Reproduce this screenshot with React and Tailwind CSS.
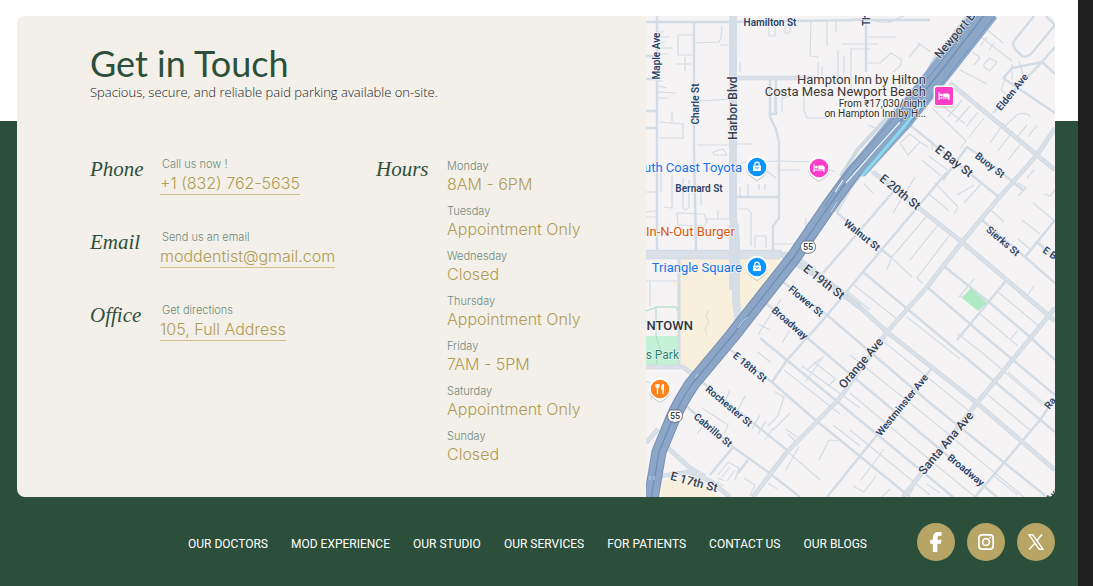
import { FaFacebookF } from "react-icons/fa6";

const contacts = [
  { label: "Phone", hint: "Call us now !", value: "+1 (832) 762-5635", href: "tel:+18327625635" },
  { label: "Email", hint: "Send us an email", value: "moddentist@gmail.com", href: "mailto:moddentist@gmail.com" },
  { label: "Office", hint: "Get directions", value: "105, Full Address", href: "#directions" },
];

const hours = [
  ["Monday", "8AM - 6PM"],
  ["Tuesday", "Appointment Only"],
  ["Wednesday", "Closed"],
  ["Thursday", "Appointment Only"],
  ["Friday", "7AM - 5PM"],
  ["Saturday", "Appointment Only"],
  ["Sunday", "Closed"],
];

const links = ["OUR DOCTORS", "MOD EXPERIENCE", "OUR STUDIO", "OUR SERVICES", "FOR PATIENTS", "CONTACT US", "OUR BLOGS"];

const InstagramMark = ({ className }) => (
  <svg viewBox="0 0 16 16" className={className} fill="none" stroke="currentColor" strokeWidth="1.7">
    <rect x=".9" y=".9" width="14.2" height="14.2" rx="3.2" />
    <circle cx="8" cy="8" r="3.4" />
    <circle cx="12.2" cy="3.8" r=".9" fill="currentColor" stroke="none" />
  </svg>
);

const XMark = ({ className }) => (
  <svg viewBox="0 0 16 16" className={className} fill="none" stroke="currentColor" strokeWidth="1.4">
    <path d="M1.1 .8H4.8L14.9 15.2H11.2Z" />
    <path d="M14 .5L8.9 6.5M7.2 8.7L1.2 15.5" />
  </svg>
);

const socials = [
  { name: "Facebook", Icon: FaFacebookF, size: "size-5" },
  { name: "Instagram", Icon: InstagramMark, size: "size-4" },
  { name: "X", Icon: XMark, size: "size-4" },
];

const lanes = [
  "M678 35H693M678 35V55H692 M695 43L719 42L721 38L722 26 M676 64H691M685 57V71 M720 45H729 M658 32H664M658 37H670M658 42H665M658 48H673M658 54H668 M658 81H663M658 86L667 88M658 92L676 93M658 98H668",
  "M659 122L683 124V138H659M672 112V122 M697 101L733 99 M697 145H733M737 144H753 M713 152L723 149L727 155H714Z M740 62V72 M769 27V36H775V27M785 26V33H790V24 M811 20L810 56L819 57 M827 20V46 M836 20V32 M842 44H860M851 50V92 M838 50V78M844 56V75M818 62V82M822 66V76 M804 88V110L807 118H827 M775 88V114M782 92V112 M783 98L790 96",
  "M740 163L779 161L815 162L835 172 M661 168V192M672 175V208L664 207 M683 178V208Q686 212 689 207V180 M701 186V205 M646 192H657M646 217H657 M677 213L704 214L707 222L704 226L678 225Z M705 219H732 M718 210V219 M696 226V248 M646 212L656 211 M738 209H748L751 213V246 M755 248V236H766V248 M806 218V236L802 244 M740 187V196M748 184V196M759 184V190M765 184V190",
  "M758 168L768 172L776 178 M779 170H800 M773 225V248M773 244H800L812 236 M646 281H677 M650 281V306 M646 381L660 388M653 386L651 400",
  "M850 19H868Q890 26 898 18L904 16 M850 44H878M850 49H870 M868 37H896 M867 63H880L891 53L902 60L900 66L893 72 M918 43L931 52M920 44L909 57 M868 125L875 128 M900 80V94",
  "M973 52L980 58L974 65 M984 64L990 58L997 62L990 71L984 67Z M984 27L1003 43M977 34L1012 61M987 37L981 45M995 42L989 50 M960 70L987 84 M1007 74L1001 90L1011 98 M1012 64V80 M1019 61L1024 77",
  "M962 100L948 117M970 106L956 122M978 112L966 127M984 118L969 137 M1004 123L990 143M1013 131L998 151M1024 140L1008 160 M1003 128L1018 114Q1027 112 1031 117 M1027 125L1018 136 M1037 125L1028 137 M938 102L965 124M932 108L966 141L960 149 M1034 170L1027 178M1044 194L1050 196L1055 190",
  "M900 143L910 134L920 142L908 155Z M920 142L928 147 M922 160L941 176M929 156L950 172M932 144V150 M1018 183L1026 188L1018 196 M974 185L957 195M983 182L964 203 M929 194L949 211M935 183L958 207L954 214 M915 177L893 213 M870 170L880 178M864 184L873 193",
  "M926 217L892 257L887 269M938 225L910 260M949 236L917 278L923 284 M1033 203L1055 221M1022 220L1040 234M1018 239L1030 249 M991 210L1004 222 M893 259L912 277 M972 294L960 297M974 279L959 297 M1034 286L1027 296",
  "M854 285L897 319M846 290L870 310M998 292L1040 327M979 313L1018 346M1018 330L1010 340 M850 355L930 419L990 469L1024 497 M850 393L930 460L975 497 M850 430L930 495 M878 337L937 385L975 416 M907 317L960 359M958 334L985 355L1042 404 M988 395L1030 430M994 476L1018 495 M1008 372L1045 404",
  "M781 299L764 325L758 335M770 330L758 324M790 330L782 343M758 352L770 362M824 356L806 381M814 362L836 379L828 386M821 358L807 370 M775 392L784 397L778 416L768 426M790 413L783 420L773 430 M786 429L797 437M788 434L798 444 M799 446L786 470M787 451L820 480 M819 460L829 440L838 441 M802 366L860 408 M784 370L840 414 M833 425L860 446",
  "M702 408L728 425L724 435M705 424L697 434 M718 475L728 462L739 468L735 480 M744 478L755 485L750 496 M718 478L725 481M716 482L724 486M730 467L722 477M735 470L727 481 M768 483L777 489 M745 396L738 410M730 390L725 402 M760 415L752 429M766 421L758 434M773 428L765 440 M876 476L864 492L853 486M890 489L882 497M914 486L909 496M927 484L940 493 M884 449L861 480",
];

const streets =
  "M646 22H735L860 20H930 M657 16V250M694 22V150L696 250 M646 56H657M646 79H657M646 111H657M646 128H657 M770 78V117L776 129L779 142V218L773 226V250 M776 80V114H770 M737 197H779 M866 18V72 M1042 62L1055 47 M1042 62L993 113 M1042 62L1055 74 M1003 78L1055 113 M1003 78L1012 68L1042 62 M910 125L1000 198 M943 180L967 147L982 157L1023 190 M947 172L863 272L823 320L787 360L772 382 M893 192L850 242L823 273 M837 213L892 258 M982 220L1025 257L1055 283 M1025 257L1055 220M1037 242L1055 258 M863 272L1055 432 M927 287L983 335L1055 395 M945 267L990 303L1030 337L1055 360 M1005 282L957 340 M783 282L827 315L930 403L1047 497 M766 303L850 374L997 497 M760 338L850 412L953 497 M728 348L773 383L813 418L910 497 M697 378L787 450 M685 405L733 447L768 472L800 497 M932 368L877 435L827 497 M1055 398L1040 420L975 497 M733 447L710 475 M748 460L738 473";

const avenues =
  "M950 83L1037 155L1055 170 M1055 128L1037 155L997 200L962 242L927 287L887 332L840 398L787 452L753 497 M873 172L962 242L1055 321 M1055 308L1033 335L977 403L903 497 M737 78H815 M646 252H782 M646 257H780 M783 254L795 256L850 298L887 332L977 403L1055 470 M660 476L690 472L712 482L730 497 M667 447L690 468L705 477 M646 367H683L695 376 M658 429L646 443 M995 16L925 97L850 187L836 212";

const labels = [
  ["Hamilton St", 770, 22, 0, 10], ["Maple Ave", 656, 56, -90, 10], ["Charle St", 695, 104, -90, 10], ["Harbor Blvd", 733, 108, -90, 12],
  ["Th", 866, 20, -90, 10], ["Newport B", 955, 35, -50, 12], ["Elden Ave", 1012, 92, -51, 10], ["E Bay St", 954, 161, 38, 12],
  ["Buoy St", 990, 165, 38, 10], ["E 20th St", 900, 192, 39, 12], ["Walnut St", 862, 235, 39, 10], ["Sierks St", 1003, 241, 40, 10],
  ["E B", 1050, 253, 35, 10], ["Bernard St", 699, 188, 0, 10], ["E 19th St", 824, 282, 38, 12], ["Flower St", 806, 301, 40, 10],
  ["Broadway", 790, 323, 41, 10], ["Orange Ave", 861, 363, -50, 12], ["E 18th St", 750, 367, 40, 10], ["Rochester St", 729, 406, 40, 10],
  ["Cabrillo St", 713, 430, 40, 10], ["E 17th St", 694, 482, 15, 12], ["Westminster Ave", 902, 405, -51, 10], ["Santa Ana Ave", 946, 443, -50, 12],
  ["Broadway", 966, 470, 39, 10], ["Ra", 1050, 403, -52, 10], ["Ave", 1053, 494, -50, 10],
];

function Label({ text, x, y, angle = 0, size = 13, fill = "#294368", anchor = "middle", weight = 500 }) {
  return (
    <text
      x={x} y={y} fill={fill} fontSize={size} fontWeight={weight} textAnchor={anchor} dominantBaseline="central"
      stroke="#f8f7f8" strokeWidth="1.6" strokeOpacity=".8" strokeLinejoin="round" paintOrder="stroke" transform={`rotate(${angle} ${x} ${y})`}
    >
      {text}
    </text>
  );
}

function Pin({ x, y, color, children }) {
  return (
    <g transform={`translate(${x} ${y})`}>
      <path d="M0 13L-5.5 9.2A11 11 0 1 1 5.5 9.2Z" transform="translate(0 1)" fill="#0003" />
      <path d="M0 13L-5.5 9.2A11 11 0 1 1 5.5 9.2Z" fill="#fff" />
      <circle r="9.3" fill={color} />
      {children}
    </g>
  );
}

const Bag = () => (
  <g>
    <path d="M-4-1.5H4V4H-4Z" fill="#fff" />
    <path d="M-2.2-1.5V-2.6a2.2 2.2 0 0 1 4.4 0v1.1" fill="none" stroke="#fff" strokeWidth="1.2" />
    <path d="M-1.6 .4Q0 2.4 1.6 .4" fill="none" stroke="#0b93ff" />
  </g>
);

const Bed = () => (
  <g fill="#fff">
    <path d="M-5.5-3.8h1.2V1.4H4.3V-1.2h1.2V4H4.3V2.6H-4.3V4H-5.5Z" />
    <circle cx="-2.6" cy="-.9" r="1.4" />
    <path d="M-.8-2.6H3.6Q5.5-2.6 5.5-.8V1H-.8Z" />
  </g>
);

const Shield = ({ x, y }) => (
  <g transform={`translate(${x} ${y})`}>
    <path d="M-5-6H5Q9-2 7 3Q5 6 0 6.5Q-5 6-7 3Q-9-2-5-6Z" fill="#fff" stroke="#6b7480" strokeWidth="1" />
    <text fill="#333c48" fontSize="9" fontWeight="500" textAnchor="middle" dominantBaseline="central">55</text>
  </g>
);

const highway = "M985 14L945 66L903 118L853 173L831 203L794 257L732 336L692 384Q680 402 673 418L659 452L651 499";

function StreetMap() {
  return (
    <svg viewBox="646 16 409 481" preserveAspectRatio="xMidYMid slice" className="absolute inset-0 size-full" fontFamily="Roboto, sans-serif" role="img" aria-label="Map of Costa Mesa">
      <rect x="646" y="16" width="409" height="481" fill="#f5f3f4" />
      <path d="M679 258H778L786 264L733 330L697 374L679 365V286H673V282H679Z M662 481L690 476L720 497H658Z" fill="#f8f0dc" />
      <path d="M646 336H679V365H646Z" fill="#c4f1d5" />
      <path d="M646 311L657 307H677V311 M656 307V336L660 348L656 365" fill="none" stroke="#a5dbbb" />
      <g fill="none" stroke="#d3dce4" strokeLinejoin="round">
        <path d={lanes.join(" ")} strokeWidth="1.2" />
        <path d={streets} strokeWidth="2.4" />
        <path d="M1034 16L1014 41Q1012 45 1015 49L1022 56Q1026 58 1031 54L1055 25L1046 16" strokeWidth="2.5" />
        <path d="M679 258V365" strokeWidth="3" />
        <path d={avenues} stroke="#ccd6de" strokeWidth="4.6" />
        <path d={avenues} stroke="#d9e0e7" strokeWidth="3.4" />
        <path d="M733 16V215L736 240V300L739 323" stroke="#d5dde6" strokeWidth="8" />
        <path d="M734 225V290" stroke="#d5dde6" strokeWidth="10" />
        <path d="M780 254L824 280L860 307" stroke="#d3dce4" strokeWidth="6" />
        <path d="M968 16L934 60L920 86L884 121L858 149L841 176" stroke="#ced8e1" strokeWidth="4" />
      </g>
      <path d="M962 298L971 288L987 303L978 311Z" fill="#aeeac4" />
      <path d="M709 310L706 316L709 322L705 329L707 335" fill="none" stroke="#ddd9d0" />
      <g fill="none" strokeLinejoin="round">
        <path d={highway} stroke="#7891b1" strokeWidth="15" />
        <path d="M992 14L948 70L906 122L860 172" stroke="#8ca8ca" strokeWidth="13" />
        <path d="M977 14L936 68L897 118L849 176" stroke="#8ca8ca" strokeWidth="12" />
        <path d={highway} stroke="#8ba6c7" strokeWidth="13" />
        <path d={highway} stroke="#708fb5" strokeWidth="1.3" />
        <path d="M995 16L952 71L910 123 M976 16L938 66L900 111L850 167L825 206" stroke="#7391b7" strokeWidth="1" />
        <path d="M900 122L874 151L846 183 M843 180L835 192" stroke="#e8f1f8" strokeWidth="1.3" />
        <path d="M922 104L902 129L862 176" stroke="#88d9ec" strokeWidth="3" />
        <path d="M738 328L743 321L748 317 M695 378L698 374 M650 480V476M654 480V476 M831 212L837 202" stroke="#c4d3e4" strokeWidth="1" />
      </g>
      {labels.map(([text, x, y, angle, size]) => (
        <Label key={`${text}-${x}`} text={text} x={x} y={y} angle={angle} size={size} fill={size === 12 ? "#344052" : "#294368"} weight={size === 12 ? 500 : 600} />
      ))}
      <Label text="Hampton Inn by Hilton" x={926} y={79} anchor="end" fill="#3c3834" weight={400} />
      <Label text="Costa Mesa Newport Beach" x={926} y={91} anchor="end" fill="#3c3834" weight={400} />
      <Label text="From ₹17,030/night" x={926} y={103} size={10} anchor="end" fill="#302e2c" weight={400} />
      <Label text="on Hampton Inn by H..." x={926} y={113} size={10} anchor="end" fill="#302e2c" weight={400} />
      <Label text="uth Coast Toyota" x={742} y={167} anchor="end" fill="#1a73e8" weight={400} />
      <Label text="Triangle Square" x={742} y={267} anchor="end" fill="#1a73e8" weight={400} />
      <Label text="In-N-Out Burger" x={646} y={231} anchor="start" fill="#dc5a0c" weight={400} />
      <Label text="NTOWN" x={693} y={325} anchor="end" fill="#30343c" />
      <Label text="s Park" x={679} y={355} size={12} anchor="end" fill="#278566" weight={400} />
      <Shield x={808} y={247} />
      <Shield x={675} y={416} />
      <Pin x={757} y={167} color="#0b93ff"><Bag /></Pin>
      <Pin x={757} y={267} color="#0b93ff"><Bag /></Pin>
      <Pin x={819} y={168} color="#fb3ec8"><Bed /></Pin>
      <Pin x={660} y={389} color="#ff821c">
        <path d="M-4-5V-2M-2.5-5V-2M-1-5V-2M-4-2H-1M-2.5-2V5M3-5V5M3-4V.5" fill="none" stroke="#fff" strokeWidth="1.3" />
        <path d="M3.5-5.2Q1-4 1 .8H3.5Z" fill="#fff" />
      </Pin>
      <g transform="translate(944 96)">
        <rect x="-10.5" y="-9.5" width="21" height="21" rx="3" fill="#0003" />
        <rect x="-10.5" y="-10.5" width="21" height="21" rx="3" fill="#fff" />
        <rect x="-9" y="-9" width="18" height="18" rx="1.5" fill="#fb3ec8" />
        <Bed />
      </g>
    </svg>
  );
}

const labelStyle = "font-['Liberation_Serif',serif] text-[21px] leading-[26px] italic text-[#2c4f3b]";

export default function App() {
  return (
    <div className="flex min-h-screen bg-[#1f1f1f] font-['Inter',sans-serif]">
      <div className="min-w-0 flex-1 bg-[linear-gradient(to_bottom,#ffffff_121px,#2c4f3b_121px)] pt-4 pr-[23px] pb-6 pl-[17px]">
        <main className="grid grid-cols-[629fr_409fr] overflow-hidden rounded-lg bg-[#f3f0e9]">
          <section className="pt-[27px] pb-[33px] pl-[73px]">
            <h1 className="font-['Lato',sans-serif] text-4xl leading-10 text-[#2c4f3b]">Get in Touch</h1>
            <p className="font-['Open_Sans',sans-serif] text-[13px] leading-[18px] font-light text-[#222222]">
              Spacious, secure, and reliable paid parking available on-site.
            </p>
            <div className="mt-[55px] grid grid-cols-[286px_1fr]">
              <div className="flex flex-col gap-[34px]">
                {contacts.map((c) => (
                  <div key={c.label} className="grid grid-cols-[70px_1fr]">
                    <h2 className={labelStyle}>{c.label}</h2>
                    <div className="flex flex-col items-start">
                      <p className="pl-0.5 text-[11px] leading-4 font-light text-[#6f8a7c]">{c.hint}</p>
                      <a href={c.href} className="border-b border-[#cfc08d] text-base leading-[22px] font-light whitespace-nowrap text-[#b09c55]">
                        {c.value}
                      </a>
                    </div>
                  </div>
                ))}
              </div>
              <div className="grid grid-cols-[71px_1fr]">
                <h2 className={labelStyle}>Hours</h2>
                <dl className="flex flex-col gap-[9px] pt-0.5">
                  {hours.map(([day, time]) => (
                    <div key={day}>
                      <dt className="text-[11px] leading-4 font-light text-[#6f8a7c]">{day}</dt>
                      <dd className="text-base leading-5 font-light text-[#b09c55]">{time}</dd>
                    </div>
                  ))}
                </dl>
              </div>
            </div>
          </section>
          <section className="relative">
            <StreetMap />
          </section>
        </main>
        <footer className="mt-[26px] flex items-center justify-end gap-[50px]">
          <nav className="flex gap-[23px] pt-1 font-['Roboto',sans-serif] text-xs leading-5 whitespace-nowrap text-white">
            {links.map((l) => (
              <a key={l} href="#top">{l}</a>
            ))}
          </nav>
          <div className="flex gap-3">
            {socials.map(({ name, Icon, size }) => (
              <a key={name} href="#social" aria-label={name} className="flex size-[38px] items-center justify-center rounded-full bg-[#b7a566] text-white">
                <Icon className={size} />
              </a>
            ))}
          </div>
        </footer>
      </div>
      <div className="w-[15px] shrink-0" />
    </div>
  );
}
